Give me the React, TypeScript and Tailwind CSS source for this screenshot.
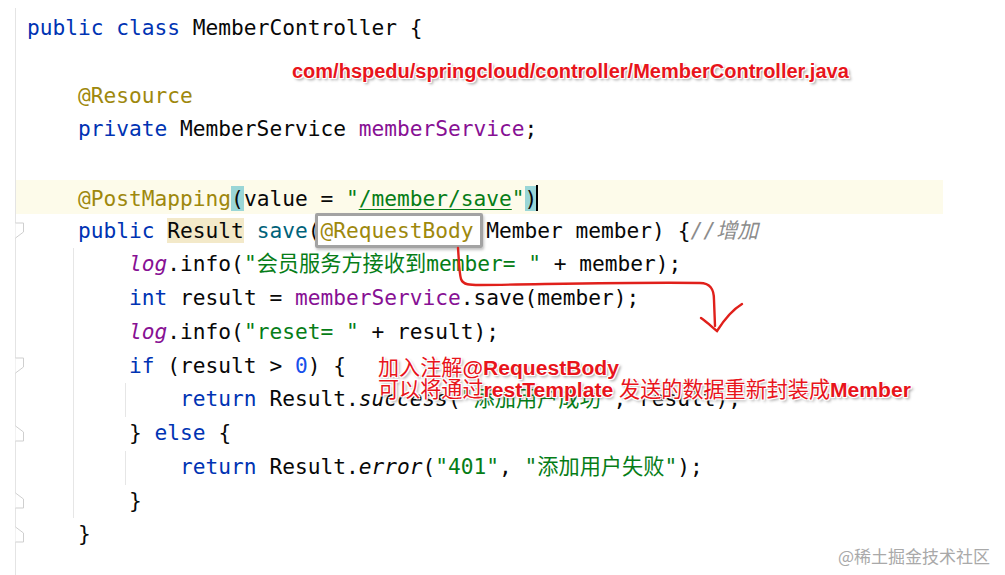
import type { ReactNode } from "react";

// 코드 토큰 색 (IntelliJ Light)
const K = ({ children }: { children: ReactNode }) => <span className="text-[#0033b3]">{children}</span>;
const An = ({ children }: { children: ReactNode }) => <span className="text-[#9e880d]">{children}</span>;
const F = ({ children }: { children: ReactNode }) => <span className="text-[#871094]">{children}</span>;
const S = ({ children }: { children: ReactNode }) => <span className="text-[#067d17]">{children}</span>;
const I = ({ children }: { children: ReactNode }) => <span className="italic">{children}</span>;

function Line({ children, className = "" }: { children?: ReactNode; className?: string }) {
  return <div className={"h-[33.75px] whitespace-pre pl-[11px] leading-[33.75px] " + className}>{children}</div>;
}

const halo =
  "[text-shadow:-1px_-1px_0_#fff,1px_-1px_0_#fff,-1px_1px_0_#fff,1px_1px_0_#fff,0_0_3px_#fff,2px_2px_3px_rgba(0,0,0,0.45)]";

function FoldMarks() {
  // 거터의 접기 표시
  const down = [223, 358];
  const up = [426, 493, 527];
  return (
    <svg className="pointer-events-none absolute left-0 top-0" width="30" height="575">
      {down.map((y) => (
        <path key={y} d={`M15.5 ${y} H23.5 V${y + 9} L15.5 ${y + 15}`} fill="#fff" stroke="#cfcfcf" strokeWidth="1" />
      ))}
      {up.map((y) => (
        <path key={y} d={`M15.5 ${y} L23.5 ${y + 6} V${y + 15} H15.5`} fill="#fff" stroke="#cfcfcf" strokeWidth="1" />
      ))}
    </svg>
  );
}

export default function App() {
  return (
    <div className="relative h-[575px] w-[1005px] overflow-hidden bg-white text-[21.2px] text-[#080808] font-['DejaVu_Sans_Mono','Noto_Sans_CJK_SC',monospace]">
      <div className="ml-[15px] mt-[8px] h-full border-l border-[#e4e4e4] pt-[3px]">
        <Line>
          <K>public</K> <K>class</K> MemberController {"{"}
        </Line>
        <Line />
        <Line>
          {"    "}
          <An>@Resource</An>
        </Line>
        <Line>
          {"    "}
          <K>private</K> MemberService <F>memberService</F>;
        </Line>
        <Line />
        <Line className="w-[927px] bg-[#fdfbea]">
          {"    "}
          <An>@PostMapping</An>
          <span className="bg-[#9ad6d6]">(</span>value = <S>"</S>
          <span className="text-[#067d17] underline decoration-1 underline-offset-[3px]">/member/save</span>
          <S>"</S>
          <span className="bg-[#9ad6d6]">)</span>
          <span className="relative -ml-[1px] inline-block h-[26px] w-[2px] translate-y-[5px] bg-black" />
        </Line>
        <Line>
          {"    "}
          <K>public</K> <span className="bg-[#f3e9c9]">Result</span> <span className="text-[#00627a]">save</span>(
          <An>@RequestBody</An> Member member) {"{"}
          <span className="italic text-[#8c8c8c]">//增加</span>
        </Line>
        <Line>
          {"        "}
          <span className="italic text-[#871094]">log</span>.info(<S>"会员服务方接收到member= "</S> + member);
        </Line>
        <Line>
          {"        "}
          <K>int</K> result = <F>memberService</F>.save(member);
        </Line>
        <Line>
          {"        "}
          <span className="italic text-[#871094]">log</span>.info(<S>"reset= "</S> + result);
        </Line>
        <Line>
          {"        "}
          <K>if</K> (result &gt; <span className="text-[#1750eb]">0</span>) {"{"}
        </Line>
        <Line>
          {"            "}
          <K>return</K> Result.<I>success</I>(<S>"添加用户成功"</S>, result);
        </Line>
        <Line>
          {"        "}
          {"} "}
          <K>else</K> {"{"}
        </Line>
        <Line>
          {"            "}
          <K>return</K> Result.<I>error</I>(<S>"401"</S>, <S>"添加用户失败"</S>);
        </Line>
        <Line>{"        }"}</Line>
        <Line>{"    }"}</Line>
      </div>

      <FoldMarks />

      {/* 들여쓰기 가이드 */}
      <div className="absolute left-[73px] top-[248px] h-[270px] w-px bg-[#e6e6e6]" />
      <div className="absolute left-[125px] top-[383px] h-[34px] w-px bg-[#e6e6e6]" />
      <div className="absolute left-[125px] top-[451px] h-[34px] w-px bg-[#e6e6e6]" />

      {/* @RequestBody 강조 박스 */}
      <div className="absolute left-[315px] top-[213px] h-[35px] w-[168px] rounded-[2px] border-[3px] border-[#a3a3a3] shadow-[1px_2px_3px_rgba(0,0,0,0.25)]" />

      {/* 빨간 화살표 */}
      <svg className="pointer-events-none absolute left-0 top-0" width="1005" height="575">
        <path
          d="M458 248 C459 260 459 272 461 279 C463 285 470 285 480 285 C560 284 640 282 700 283 C711 283 714 290 714 300 L715 326"
          fill="none"
          stroke="#e0201b"
          strokeWidth="2.4"
          strokeLinecap="round"
        />
        <path d="M701 318 C707 322 712 327 717 331 C724 320 732 310 742 304" fill="none" stroke="#e0201b" strokeWidth="2.4" strokeLinecap="round" />
      </svg>

      {/* 빨간 주석 */}
      <div
        className={
          "absolute left-[292px] top-[59px] whitespace-nowrap text-[20px] font-bold leading-[24px] text-[#e8141b] font-['Liberation_Sans',Arial,sans-serif] " +
          halo
        }
      >
        com/hspedu/springcloud/controller/MemberController.java
      </div>
      <div
        className={
          "absolute left-[378px] top-[357px] whitespace-nowrap text-[21.1px] font-bold leading-[22px] text-[#e8141b] font-['Liberation_Sans','Noto_Sans_CJK_SC',sans-serif] " +
          halo
        }
      >
        <div>
          <span className="font-normal">加入注解</span>@RequestBody
        </div>
        <div>
          <span className="font-normal">可以将通过</span>restTemplate <span className="font-normal">发送的数据重新封装成</span>Member
        </div>
      </div>

      {/* 워터마크 */}
      <div className="absolute left-[838px] top-[544px] whitespace-nowrap text-[17px] leading-[24px] text-[#a9a9a9] font-['Noto_Sans_CJK_SC',sans-serif]">
        @稀土掘金技术社区
      </div>
    </div>
  );
}
